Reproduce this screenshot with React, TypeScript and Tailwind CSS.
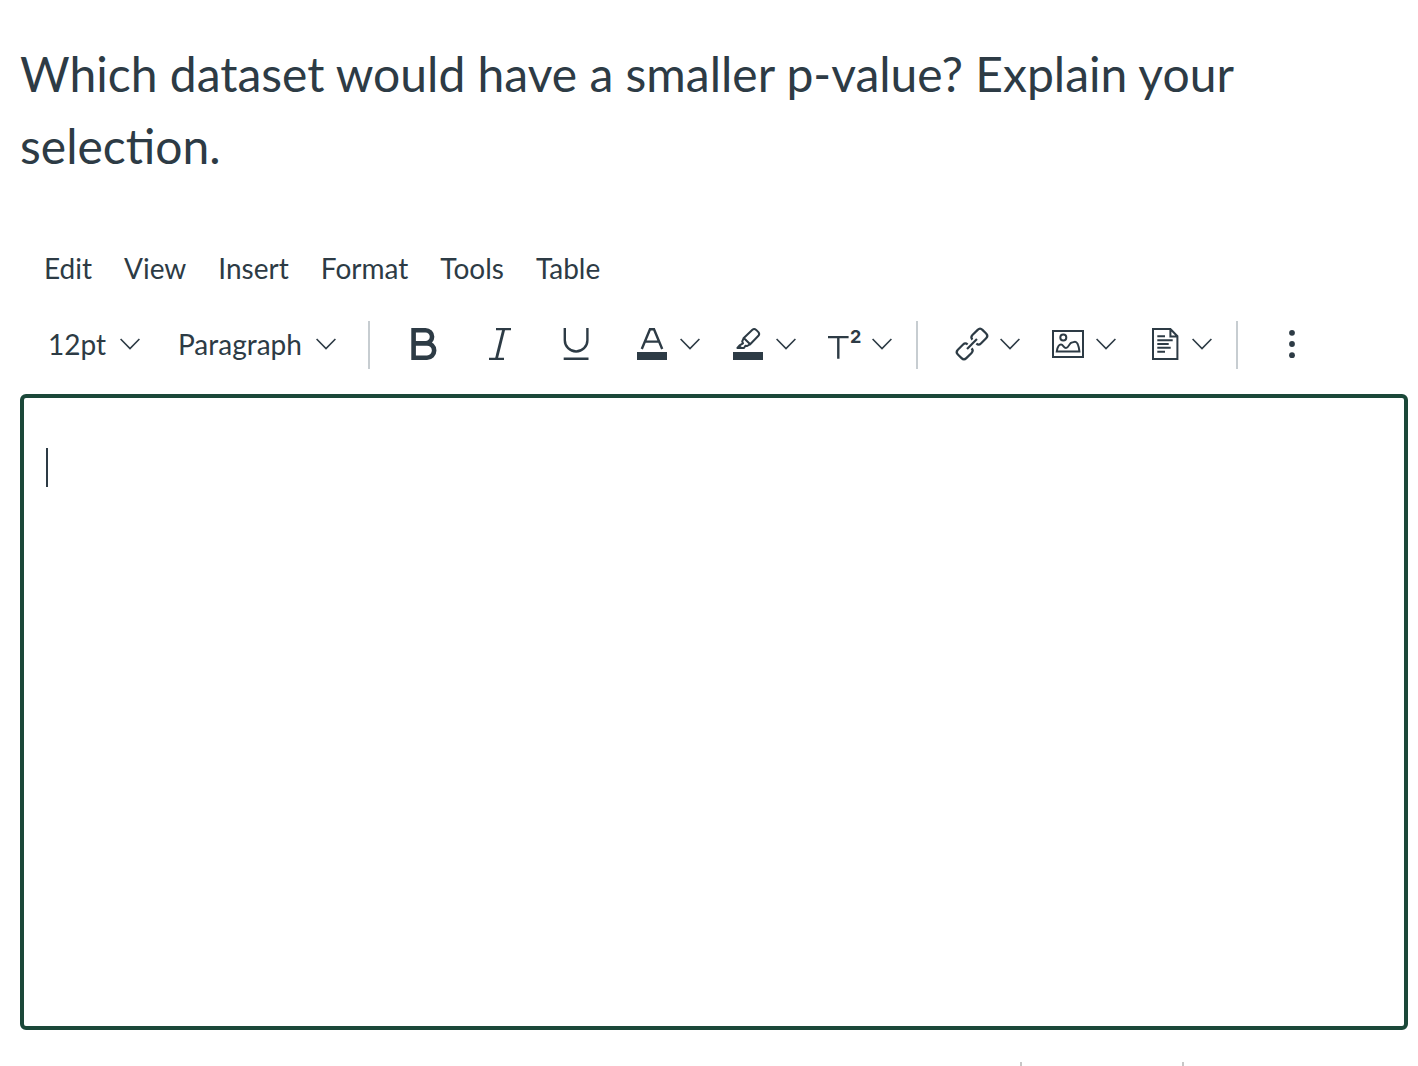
import React from 'react';

const MENUS = ['Edit', 'View', 'Insert', 'Format', 'Tools', 'Table'];

interface IconProps {
  children: React.ReactNode;
}

const Icon = ({ children }: IconProps) => (
  <svg className="h-8 w-8 overflow-visible" viewBox="0 0 32 32" fill="none" stroke="currentColor" strokeWidth="2.4" aria-hidden="true">
    {children}
  </svg>
);

const Chevron = () => (
  <svg className="h-3 w-5" viewBox="0 0 20 12" fill="none" stroke="currentColor" strokeWidth="1.6" aria-hidden="true">
    <path d="M0.6 1L10 10.6L19.4 1" />
  </svg>
);

const BoldIcon = () => (
  <Icon>
    <path strokeWidth="4.6" d="M5.6 2.3H17.5A6.4 6.4 0 0 1 17.5 15.4H5.6M17.5 15.4H19A7.1 7.1 0 0 1 19 29.7H5.6M5.6 0V32" />
  </Icon>
);

const ItalicIcon = () => (
  <Icon>
    <path d="M12 1.1H27M5 30.9H20" />
    <path strokeWidth="2.8" d="M19.8 1.2L12.4 30.8" />
  </Icon>
);

const UnderlineIcon = () => (
  <Icon>
    <path d="M4.8 0V12.2A11.3 11.3 0 0 0 27.4 12.2V0M3.7 30.8H28.5" />
  </Icon>
);

const TextColorIcon = () => (
  <Icon>
    <path d="M5.8 21L14 1.2H18L26.2 21M8.8 13.6H23.2" />
    <path strokeWidth="8" d="M1 28H31" />
  </Icon>
);

const HighlightIcon = () => (
  <Icon>
    <path strokeWidth="2" strokeLinejoin="round" d="M11.8 10L20.4 1.7Q22.2 0.2 24.2 1.9L26.4 4.1Q28 6 26.4 7.8L18.2 16.2Z" />
    <path strokeWidth="2" strokeLinejoin="round" d="M11.8 10L10.2 13.4L11 15.4L7.6 17.4L5.4 20H12L13.4 17.8L15.2 18L18.2 16.2" />
    <path fill="currentColor" stroke="none" d="M7.6 17.2L11.6 20.4H5Z" />
    <path strokeWidth="8" d="M1 28H31" />
  </Icon>
);

const SuperscriptIcon = () => (
  <Icon>
    <path d="M0 9.1H20.6M10.3 9.1V30.7" />
    <text x="22" y="15" fill="currentColor" stroke="none" className="font-['Inter',sans-serif] text-lg font-bold">
      2
    </text>
  </Icon>
);

const LinkIcon = () => (
  <Icon>
    <g transform="translate(16 16) rotate(-45)" strokeWidth="2.2">
      <path d="M-7 0H7" />
      <path d="M3.4 -2.8Q3.4 -6 6.6 -6H14Q17.4 -6 17.4 -2.6V2.6Q17.4 6 14 6H6.6Q3.4 6 3.4 2.8" />
      <path d="M-3.4 -2.8Q-3.4 -6 -6.6 -6H-14Q-17.4 -6 -17.4 -2.6V2.6Q-17.4 6 -14 6H-6.6Q-3.4 6 -3.4 2.8" />
    </g>
  </Icon>
);

const ImageIcon = () => (
  <Icon>
    <rect x="1" y="3" width="30" height="26" strokeWidth="2" />
    <circle cx="11.3" cy="9.4" r="3" strokeWidth="2" />
    <path strokeWidth="2" d="M4.8 23.4C5.4 19.6 7 16.6 9 16.6C11.4 16.6 11.6 20 14 20C17 20 17.2 14.4 20 14.4C21.4 14.4 21.6 13.8 23 13.8C25.6 13.8 26.8 18.4 27.4 23.4Z" />
  </Icon>
);

const DocumentIcon = () => (
  <Icon>
    <path strokeWidth="2" d="M5 1H22.4L29.4 8.2V31H5ZM22.4 1V8.6H29.4" />
    <path strokeWidth="2" d="M9.3 8.3H17M9.3 12.3H24.7M9.3 16H20.7M9.3 19.7H22.7M9.3 23.7H17" />
  </Icon>
);

const MoreIcon = () => (
  <Icon>
    <g fill="currentColor" stroke="none">
      <circle cx="16" cy="4.8" r="2.9" />
      <circle cx="16" cy="16" r="2.9" />
      <circle cx="16" cy="27.2" r="2.9" />
    </g>
  </Icon>
);

interface ToolProps {
  label: string;
  children: React.ReactNode;
}

const ToolButton = ({ label, children }: ToolProps) => (
  <button type="button" aria-label={label} className="flex h-[46px] w-[76px] items-center justify-center">
    {children}
  </button>
);

const SplitButton = ({ label, children }: ToolProps) => (
  <div className="flex h-[46px] w-24 items-center pl-[22px]">
    <button type="button" aria-label={label}>
      {children}
    </button>
    <button type="button" aria-label={`${label} options`} className="ml-3 flex h-8 items-center">
      <Chevron />
    </button>
  </div>
);

const Divider = () => <div className="ml-[14px] mr-4 h-12 w-0.5 bg-[#c7cdd1]" />;

const App = () => {
  return (
    <main className="bg-white pl-5 pr-[10px] pt-[38px] font-['Lato',sans-serif] text-[#2d3b45]">
      <label htmlFor="answer" className="block text-5xl leading-[72px]">
        Which dataset would have a smaller p-value? Explain your selection.
      </label>

      <nav className="mt-[61px] flex gap-8 pl-6 text-[28px] leading-[50px]">
        {MENUS.map((menu) => (
          <button key={menu} type="button">
            {menu}
          </button>
        ))}
      </nav>

      <div className="mt-7 flex items-start pl-7">
        <div className="relative mr-[38px] w-[92px]">
          <select aria-label="Font size" className="block h-[46px] w-full appearance-none bg-transparent text-[28px]">
            <option>12pt</option>
          </select>
          <span className="pointer-events-none absolute inset-y-0 right-0 flex items-center">
            <Chevron />
          </span>
        </div>
        <div className="relative mr-[18px] w-[158px]">
          <select aria-label="Block style" className="block h-[46px] w-full appearance-none bg-transparent text-[28px]">
            <option>Paragraph</option>
          </select>
          <span className="pointer-events-none absolute inset-y-0 right-0 flex items-center">
            <Chevron />
          </span>
        </div>
        <Divider />
        <ToolButton label="Bold"><BoldIcon /></ToolButton>
        <ToolButton label="Italic"><ItalicIcon /></ToolButton>
        <ToolButton label="Underline"><UnderlineIcon /></ToolButton>
        <SplitButton label="Text color"><TextColorIcon /></SplitButton>
        <SplitButton label="Background color"><HighlightIcon /></SplitButton>
        <SplitButton label="Superscript"><SuperscriptIcon /></SplitButton>
        <Divider />
        <SplitButton label="Link"><LinkIcon /></SplitButton>
        <SplitButton label="Image"><ImageIcon /></SplitButton>
        <SplitButton label="Document"><DocumentIcon /></SplitButton>
        <Divider />
        <ToolButton label="More"><MoreIcon /></ToolButton>
      </div>

      <div className="relative mt-[25px] rounded-md border-4 border-[#1b4839]">
        <textarea
          id="answer"
          className="block h-[628px] w-full resize-none px-[22px] py-12 text-[32px] caret-transparent outline-none"
        />
        {/* insertion caret */}
        <span className="absolute left-[22px] top-[50px] h-[39px] w-0.5 bg-[#2d3b45]" />
      </div>

      {/* top edge of the status bar separators */}
      <div className="mt-8 flex h-1 justify-end gap-40 pr-[224px]">
        <div className="w-0.5 bg-[#c7c7c7]" />
        <div className="w-0.5 bg-[#c7c7c7]" />
      </div>
    </main>
  );
};

export default App;
